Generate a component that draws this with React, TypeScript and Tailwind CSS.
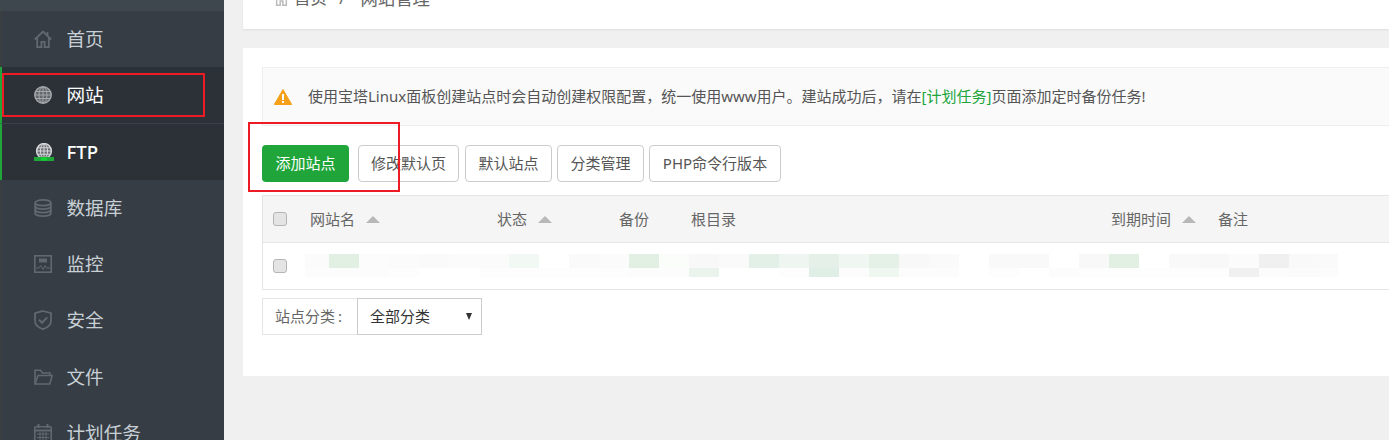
import { ReactNode } from "react";

const fontStack = "font-['Noto_Sans','Noto_Sans_CJK_SC',sans-serif]";

function HomeIcon({ className = "" }: { className?: string }) {
  return (
    <svg viewBox="0 0 18 18" className={className} fill="none" stroke="currentColor" strokeWidth="1.8">
      <path d="M.8 9.5 9 1.6l8.2 7.9" />
      <path d="M13.5 5.5V2" />
      <path d="M3.2 8v9.1h4.2v-5.2h3.2v5.2h4.2V8" />
    </svg>
  );
}

function GlobeIcon() {
  return (
    <svg viewBox="0 0 18 18" className="h-[18px] w-[18px]" fill="none" stroke="#a4a8ab" strokeWidth="1">
      <circle cx="9" cy="9" r="8.2" fill="#63676c" strokeWidth="1.5" />
      <ellipse cx="9" cy="9" rx="4" ry="8" />
      <path d="M9 1v16M2 5.5h14M1 9h16M2 12.5h14" />
    </svg>
  );
}

function FtpIcon() {
  return (
    <svg viewBox="0 0 20 18" className="h-[18px] w-[20px]" fill="none">
      <circle cx="10" cy="8" r="7.4" fill="#6b6f73" stroke="#d6d8da" strokeWidth="1.5" />
      <ellipse cx="10" cy="8" rx="3.6" ry="7" stroke="#d6d8da" />
      <path d="M10 1v13M3.5 4.8h13M3 8h14M3.5 11.2h13" stroke="#d6d8da" />
      <rect x="0" y="14" width="20" height="4" fill="#1fa83a" />
      <rect x="7" y="14.5" width="6" height="3" fill="#0fd52e" />
    </svg>
  );
}

function DatabaseIcon() {
  return (
    <svg viewBox="0 0 18 18" className="h-[18px] w-[18px]" fill="none" stroke="currentColor" strokeWidth="1.8">
      <ellipse cx="9" cy="3.8" rx="7.8" ry="2.9" />
      <path d="M1.2 3.8v10.4c0 1.6 3.5 2.9 7.8 2.9s7.8-1.3 7.8-2.9V3.8" />
      <path d="M1.2 7.3c0 1.6 3.5 2.9 7.8 2.9s7.8-1.3 7.8-2.9M1.2 10.8c0 1.6 3.5 2.9 7.8 2.9s7.8-1.3 7.8-2.9" />
    </svg>
  );
}

function MonitorIcon() {
  return (
    <svg viewBox="0 0 18 18" className="h-[18px] w-[18px]" fill="none" stroke="currentColor">
      <rect x="0.8" y="0.8" width="16.4" height="16.4" strokeWidth="1.6" />
      <rect x="5" y="3.5" width="8" height="4" fill="currentColor" stroke="none" />
      <path d="M2 13h3l1.5-2.5L9 14.5l2-4 1.5 2.5H16" strokeWidth="1" />
    </svg>
  );
}

function ShieldCheckIcon() {
  return (
    <svg viewBox="0 0 18 20" className="h-[20px] w-[18px]" fill="none" stroke="currentColor" strokeWidth="1.8">
      <path d="M9 1 17 3.2V10.5C17 15 13 18 9 19.2 5 18 1 15 1 10.5V3.2Z" />
      <path d="M5 9.8l3 3 5.2-5.4" strokeWidth="2" />
    </svg>
  );
}

function FolderIcon() {
  return (
    <svg viewBox="0 0 19 16" className="h-[16px] w-[19px]" fill="none" stroke="currentColor" strokeWidth="1.6">
      <path d="M1 15V1.2h5.5L8.5 4H16v2.5" />
      <path d="M1 15 4 6.5h14.2L15.8 15Z" />
    </svg>
  );
}

function CalendarIcon() {
  return (
    <svg viewBox="0 0 18 18" className="h-[18px] w-[18px]" fill="none" stroke="currentColor">
      <rect x="0.8" y="2.8" width="16.4" height="14.4" rx="1" strokeWidth="1.6" />
      <path d="M1 6.5h16" strokeWidth="2" />
      <path d="M4.5 0v4M13.5 0v4" strokeWidth="2" />
      <path d="M3 10h12M3 13.5h12M6 8v8M9 8v8M12 8v8" strokeWidth="1" />
    </svg>
  );
}

type NavItem = { label: string; icon: ReactNode; active?: boolean };

const navItems: NavItem[] = [
  { label: "首页", icon: <HomeIcon className="h-[18px] w-[18px]" /> },
  { label: "网站", icon: <GlobeIcon />, active: true },
  { label: "FTP", icon: <FtpIcon />, active: true },
  { label: "数据库", icon: <DatabaseIcon /> },
  { label: "监控", icon: <MonitorIcon /> },
  { label: "安全", icon: <ShieldCheckIcon /> },
  { label: "文件", icon: <FolderIcon /> },
  { label: "计划任务", icon: <CalendarIcon /> },
];

function Sidebar() {
  return (
    <aside className="h-[440px] w-[224px] shrink-0 overflow-hidden bg-[#363d44]">
      <div className="h-[11px] bg-[#3e464e]" />
      {navItems.map((item) => (
        <div
          key={item.label}
          className={`flex h-[56.25px] items-center border-l-2 pl-[32px] ${
            item.active
              ? "border-l-[#20a53a] bg-[#2c3138] text-white"
              : "border-l-[#3c3f42] text-[#c8d0d6]"
          } ${item.label === "网站" ? "border-b border-b-[#3a4047]" : ""}`}
        >
          <span className={`flex w-[32.5px] justify-start ${item.active ? "" : "text-[#62686e]"}`}>
            {item.icon}
          </span>
          <span className={`text-[18.6px] ${item.label === "FTP" ? "font-medium" : ""}`}>
            {item.label}
          </span>
        </div>
      ))}
    </aside>
  );
}

function SortArrow() {
  return (
    <span className="ml-[11px] inline-block h-0 w-0 border-x-[7.5px] border-b-[7px] border-x-transparent border-b-[#b8b8b8]" />
  );
}

function FakeCheckbox() {
  return (
    <span className="block h-[14px] w-[14px] rounded-[3px] border border-[#b5b5b5] bg-[#e4e4e4]" />
  );
}

// blurred-out row: 30px mosaic cells
const mosaicTop = [
  "bg-[#fbfbfb]", "bg-[#e1f0e3]", "bg-[#fcfcfc]", "bg-[#fbfbfb]", "bg-[#fafafa]", "bg-[#fbfbfb]",
  "bg-[#fbfbfb]", "bg-[#f2f8f3]", "bg-white", "bg-[#fafafa]", "bg-[#fbfbfb]", "bg-[#e1f0e3]",
  "bg-[#fbfdfb]", "bg-[#f8f8f8]", "bg-[#fafafa]", "bg-[#e3f0e7]", "bg-[#eff6f1]", "bg-[#e5f1e8]",
  "bg-[#f0f6f1]", "bg-[#e5f0e7]", "bg-[#f8f8f8]", "bg-[#fafafa]", "bg-white", "bg-[#f9f9f9]",
  "bg-[#f9f9f9]", "bg-white", "bg-[#f8f8f8]", "bg-[#e2f0e4]", "bg-white", "bg-[#f9f9f9]",
  "bg-[#f8f8f8]", "bg-[#fbfbfb]", "bg-[#f0f0f0]", "bg-[#f9f9f9]", "bg-[#fafafa]",
];

const mosaicBottom = [
  "bg-[#fcfcfc]", "bg-[#fcfcfc]", "bg-[#fcfcfc]", "bg-[#fdfdfd]", "bg-white", "bg-white",
  "bg-[#fdfdfd]", "bg-[#fdfdfd]", "bg-[#fdfdfd]", "bg-[#fdfdfd]", "bg-[#fdfdfd]", "bg-[#fcfcfc]",
  "bg-[#fcfcfc]", "bg-[#eaf3ec]", "bg-white", "bg-white", "bg-[#fdfdfd]", "bg-[#e0efe5]",
  "bg-[#fcfcfc]", "bg-[#eef7f0]", "bg-[#fcfcfc]", "bg-[#fcfcfc]", "bg-white", "bg-[#fdfdfd]",
  "bg-white", "bg-[#fcfcfc]", "bg-[#fdfdfd]", "bg-[#fdfdfd]", "bg-[#fdfdfd]", "bg-[#fdfdfd]",
  "bg-[#fdfdfd]", "bg-[#f0f0f0]", "bg-[#fcfcfc]", "bg-[#fbfbfb]", "bg-[#fcfcfc]",
];

function MosaicRow({ cells, height }: { cells: string[]; height: string }) {
  return (
    <div className={`flex ${height}`}>
      {cells.map((cell, i) => (
        <span
          key={i}
          className={`${i === 0 ? "w-[24px]" : i === cells.length - 1 ? "w-[19px]" : "w-[30px]"} ${cell}`}
        />
      ))}
    </div>
  );
}

const toolbarButtons = [
  { label: "修改默认页", width: "w-[101px] mr-[1px]" },
  { label: "默认站点", width: "w-[87px]" },
  { label: "分类管理", width: "w-[87px]" },
  { label: "PHP命令行版本", width: "w-[132px]" },
];

export default function App() {
  return (
    <div className={`relative flex h-[440px] w-[1389px] overflow-hidden bg-[#f0f0f0] ${fontStack}`}>
      <Sidebar />

      <main className="ml-[19px] flex-1">
        {/* Breadcrumb, cut off by the top of the window */}
        <div className="h-[29px] overflow-hidden bg-white pl-[31px] text-[16.6px] text-[#666] shadow-[0_1px_2px_rgba(0,0,0,0.08)]">
          <div className="-mt-[15px] flex h-[26px] items-center">
            <HomeIcon className="mr-[5px] h-[15px] w-[15px] text-[#bbb]" />
            <span>首页</span>
            <span className="ml-[12px] mr-[15px]">/</span>
            <span className="text-[17.4px]">网站管理</span>
          </div>
        </div>

        <section className="mt-[19px] h-[328px] bg-white pl-[19px] pt-[19px]">
          {/* Notice */}
          <div className="flex h-[59px] items-center border border-r-0 border-[#eee] bg-[#fafafa] pl-[11px] text-[15px] text-[#555]">
            <svg viewBox="0 0 18 16" className="mr-[16px] h-[16px] w-[18px]">
              <path d="M9 0.5 17.7 15.5H.3z" fill="#f5a01a" stroke="#f5a01a" strokeLinejoin="round" />
              <path d="M8 5h2v6H8zM8 12h2v2H8z" fill="#fff" />
            </svg>
            <span className="whitespace-nowrap">
              使用宝塔Linux面板创建站点时会自动创建权限配置，统一使用www用户。建站成功后，请在
              <span className="text-[#20a53a]">[计划任务]</span>
              页面添加定时备份任务!
            </span>
          </div>

          {/* Toolbar */}
          <div className="mt-[19px] flex gap-[5px] text-[15px]">
            <button className="mr-[4px] h-[37px] w-[87px] rounded-[4px] bg-[#20a53a] text-white">
              添加站点
            </button>
            {toolbarButtons.map((btn) => (
              <button
                key={btn.label}
                className={`h-[37px] ${btn.width} rounded-[4px] border border-[#ccc] bg-white text-[#555]`}
              >
                {btn.label}
              </button>
            ))}
          </div>

          {/* Site table */}
          <div className="mt-[13px] border border-r-0 border-[#e5e5e5] text-[15px] text-[#666]">
            <div className="grid h-[47px] grid-cols-[47px_187px_122px_72px_420px_107px_1fr] items-center border-b border-[#e5e5e5] bg-[#f5f5f5]">
              <span className="pl-[10px]"><FakeCheckbox /></span>
              <span className="flex items-center">网站名<SortArrow /></span>
              <span className="flex items-center">状态<SortArrow /></span>
              <span>备份</span>
              <span>根目录</span>
              <span className="flex items-center">到期时间<SortArrow /></span>
              <span>备注</span>
            </div>
            <div className="relative flex h-[46px] items-center pl-[10px]">
              <FakeCheckbox />
              <div className="ml-[18px] mt-[-1px]">
                <MosaicRow cells={mosaicTop} height="h-[14px]" />
                <MosaicRow cells={mosaicBottom} height="h-[9px]" />
              </div>
            </div>
          </div>

          {/* Category filter */}
          <div className="mt-[8px] flex h-[37px] w-[220px] text-[15px]">
            <span className="flex w-[95px] items-center border border-r-0 border-[#e5e5e5] pl-[12px] text-[#666]">
              站点分类<span className="ml-[3px]">:</span>
            </span>
            <span className="flex w-[125px] items-center justify-between border border-[#ccc] pl-[12px] pr-[9px] text-[#333]">
              全部分类
              <span className="h-0 w-0 border-x-[3.5px] border-t-[7px] border-x-transparent border-t-[#333]" />
            </span>
          </div>
        </section>
      </main>

      {/* Red annotation boxes drawn over the screenshot */}
      <div className="absolute left-[2px] top-[73px] h-[44px] w-[203px] border-2 border-[#ed1c24]" />
      <div className="absolute left-[248px] top-[122px] h-[70px] w-[152px] border-2 border-[#ed1c24]" />
    </div>
  );
}
